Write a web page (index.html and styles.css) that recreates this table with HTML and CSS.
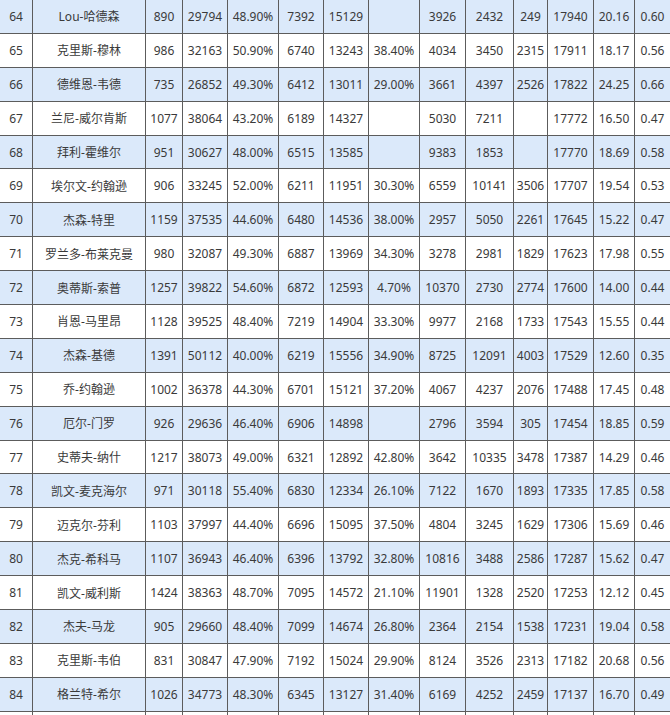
FILE: index.html
```html
<!DOCTYPE html>
<html lang="zh">
<head>
<meta charset="utf-8">
<title>得分榜</title>
<link rel="stylesheet" href="styles.css">
</head>
<body>
<div class="sheet">
  <div class="row alt"><span>64</span><span>Lou-哈德森</span><span>890</span><span>29794</span><span>48.90%</span><span>7392</span><span>15129</span><span></span><span>3926</span><span>2432</span><span>249</span><span>17940</span><span>20.16</span><span>0.60</span></div>
  <div class="row"><span>65</span><span>克里斯-穆林</span><span>986</span><span>32163</span><span>50.90%</span><span>6740</span><span>13243</span><span>38.40%</span><span>4034</span><span>3450</span><span>2315</span><span>17911</span><span>18.17</span><span>0.56</span></div>
  <div class="row alt"><span>66</span><span>德维恩-韦德</span><span>735</span><span>26852</span><span>49.30%</span><span>6412</span><span>13011</span><span>29.00%</span><span>3661</span><span>4397</span><span>2526</span><span>17822</span><span>24.25</span><span>0.66</span></div>
  <div class="row"><span>67</span><span>兰尼-威尔肯斯</span><span>1077</span><span>38064</span><span>43.20%</span><span>6189</span><span>14327</span><span></span><span>5030</span><span>7211</span><span></span><span>17772</span><span>16.50</span><span>0.47</span></div>
  <div class="row alt"><span>68</span><span>拜利-霍维尔</span><span>951</span><span>30627</span><span>48.00%</span><span>6515</span><span>13585</span><span></span><span>9383</span><span>1853</span><span></span><span>17770</span><span>18.69</span><span>0.58</span></div>
  <div class="row"><span>69</span><span>埃尔文-约翰逊</span><span>906</span><span>33245</span><span>52.00%</span><span>6211</span><span>11951</span><span>30.30%</span><span>6559</span><span>10141</span><span>3506</span><span>17707</span><span>19.54</span><span>0.53</span></div>
  <div class="row alt"><span>70</span><span>杰森-特里</span><span>1159</span><span>37535</span><span>44.60%</span><span>6480</span><span>14536</span><span>38.00%</span><span>2957</span><span>5050</span><span>2261</span><span>17645</span><span>15.22</span><span>0.47</span></div>
  <div class="row"><span>71</span><span>罗兰多-布莱克曼</span><span>980</span><span>32087</span><span>49.30%</span><span>6887</span><span>13969</span><span>34.30%</span><span>3278</span><span>2981</span><span>1829</span><span>17623</span><span>17.98</span><span>0.55</span></div>
  <div class="row alt"><span>72</span><span>奥蒂斯-索普</span><span>1257</span><span>39822</span><span>54.60%</span><span>6872</span><span>12593</span><span>4.70%</span><span>10370</span><span>2730</span><span>2774</span><span>17600</span><span>14.00</span><span>0.44</span></div>
  <div class="row"><span>73</span><span>肖恩-马里昂</span><span>1128</span><span>39525</span><span>48.40%</span><span>7219</span><span>14904</span><span>33.30%</span><span>9977</span><span>2168</span><span>1733</span><span>17543</span><span>15.55</span><span>0.44</span></div>
  <div class="row alt"><span>74</span><span>杰森-基德</span><span>1391</span><span>50112</span><span>40.00%</span><span>6219</span><span>15556</span><span>34.90%</span><span>8725</span><span>12091</span><span>4003</span><span>17529</span><span>12.60</span><span>0.35</span></div>
  <div class="row"><span>75</span><span>乔-约翰逊</span><span>1002</span><span>36378</span><span>44.30%</span><span>6701</span><span>15121</span><span>37.20%</span><span>4067</span><span>4237</span><span>2076</span><span>17488</span><span>17.45</span><span>0.48</span></div>
  <div class="row alt"><span>76</span><span>厄尔-门罗</span><span>926</span><span>29636</span><span>46.40%</span><span>6906</span><span>14898</span><span></span><span>2796</span><span>3594</span><span>305</span><span>17454</span><span>18.85</span><span>0.59</span></div>
  <div class="row"><span>77</span><span>史蒂夫-纳什</span><span>1217</span><span>38073</span><span>49.00%</span><span>6321</span><span>12892</span><span>42.80%</span><span>3642</span><span>10335</span><span>3478</span><span>17387</span><span>14.29</span><span>0.46</span></div>
  <div class="row alt"><span>78</span><span>凯文-麦克海尔</span><span>971</span><span>30118</span><span>55.40%</span><span>6830</span><span>12334</span><span>26.10%</span><span>7122</span><span>1670</span><span>1893</span><span>17335</span><span>17.85</span><span>0.58</span></div>
  <div class="row"><span>79</span><span>迈克尔-芬利</span><span>1103</span><span>37997</span><span>44.40%</span><span>6696</span><span>15095</span><span>37.50%</span><span>4804</span><span>3245</span><span>1629</span><span>17306</span><span>15.69</span><span>0.46</span></div>
  <div class="row alt"><span>80</span><span>杰克-希科马</span><span>1107</span><span>36943</span><span>46.40%</span><span>6396</span><span>13792</span><span>32.80%</span><span>10816</span><span>3488</span><span>2586</span><span>17287</span><span>15.62</span><span>0.47</span></div>
  <div class="row"><span>81</span><span>凯文-威利斯</span><span>1424</span><span>38363</span><span>48.70%</span><span>7095</span><span>14572</span><span>21.10%</span><span>11901</span><span>1328</span><span>2520</span><span>17253</span><span>12.12</span><span>0.45</span></div>
  <div class="row alt"><span>82</span><span>杰夫-马龙</span><span>905</span><span>29660</span><span>48.40%</span><span>7099</span><span>14674</span><span>26.80%</span><span>2364</span><span>2154</span><span>1538</span><span>17231</span><span>19.04</span><span>0.58</span></div>
  <div class="row"><span>83</span><span>克里斯-韦伯</span><span>831</span><span>30847</span><span>47.90%</span><span>7192</span><span>15024</span><span>29.90%</span><span>8124</span><span>3526</span><span>2313</span><span>17182</span><span>20.68</span><span>0.56</span></div>
  <div class="row alt"><span>84</span><span>格兰特-希尔</span><span>1026</span><span>34773</span><span>48.30%</span><span>6345</span><span>13127</span><span>31.40%</span><span>6169</span><span>4252</span><span>2459</span><span>17137</span><span>16.70</span><span>0.49</span></div>
  <div class="row"><span></span><span></span><span></span><span></span><span></span><span></span><span></span><span></span><span></span><span></span><span></span><span></span><span></span><span></span></div>
</div>
</body>
</html>
```
FILE: styles.css
```css
html, body {
  margin: 0;
  padding: 0;
  background: #ffffff;
  overflow: hidden;
}

.sheet {
  width: 671px;
  font-family: "Noto Sans", "Noto Sans CJK SC", sans-serif;
  font-size: 12px;
  color: #3a3a3a;
}

.row {
  display: grid;
  grid-template-columns: 33px 113px 37px 45px 51px 45px 45px 51px 46px 48px 34px 46px 41px 36px;
  height: 33.9px;
  box-sizing: border-box;
  background: #ffffff;
}

.row.alt {
  background: #dbe9fa;
}

.row > span {
  display: flex;
  align-items: center;
  justify-content: center;
  box-sizing: border-box;
  border-right: 1px solid #5c5c5c;
  border-bottom: 1px solid #5c5c5c;
  white-space: nowrap;
  overflow: hidden;
}
```
